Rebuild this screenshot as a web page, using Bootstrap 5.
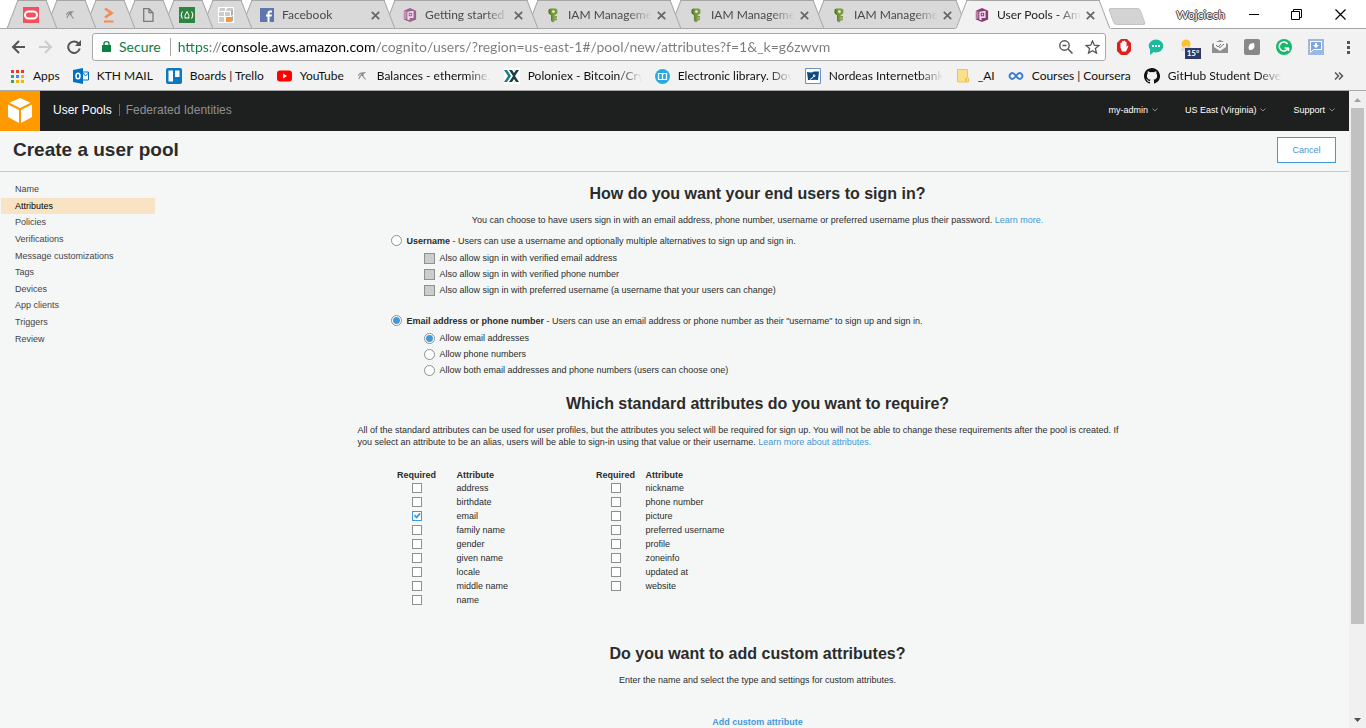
<!DOCTYPE html>
<html lang="en">
<head>
<meta charset="utf-8">
<meta name="viewport" content="width=device-width, initial-scale=1">
<title>User Pools - Amazon Cognito</title>
<link href="https://cdn.jsdelivr.net/npm/bootstrap@5.3.0/dist/css/bootstrap.min.css" rel="stylesheet">
<style>
  :root { --ui: Lato, "Open Sans", sans-serif; --aws: "Liberation Sans", Arial, sans-serif; --blue: #4199d9; }
  body { font-family: var(--aws); font-size: 9px; line-height: 12px; color: #2b2b2b; background: #f5f7f7; }
  button { font: inherit; color: inherit; background: none; border: 0; padding: 0; }
  svg { display: block; flex: none; }

  /* browser window */
  .chrome { font-family: var(--ui); font-size: 12px; line-height: 16px; color: #222; background: #f2f2f2; border-bottom: 1px solid #a9a9a9; }
  .strip { height: 29px; background: #fff; padding-left: 19px; box-shadow: inset 0 -1px #a6a6a6; }
  .tab { position: relative; isolation: isolate; height: 29px; margin-left: -13px; flex: 0 0 156px; padding: 1px 16px 0 20px; color: #4a4a4a; }
  .tab.pinned { flex-basis: 52px; padding: 1px 2px 0 0; }
  .tab::before, .tab::after { content: ""; position: absolute; z-index: -1; top: 0; bottom: 0; background: #d9d9d9; border: 1px solid #a6a6a6; }
  .tab::before { left: 6px; right: 20px; border-right: 0; transform: skewX(-21deg); }
  .tab::after { left: 20px; right: 6px; border-left: 0; transform: skewX(21deg); }
  .tab.current { z-index: 20; color: #222; }
  .tab.current::before, .tab.current::after { background: #f2f2f2; border-bottom-color: #f2f2f2; }
  .tab-title, .mark-title { white-space: nowrap; }
  .tab-title { width: 84px; -webkit-mask-image: linear-gradient(90deg, #000 60px, transparent 84px); }
  .mark-title.long { width: 114px; -webkit-mask-image: linear-gradient(90deg, #000 90px, transparent 114px); }
  .newtab { width: 32px; height: 17px; background: #d3d3d3; border: 1px solid #c3c3c3; border-radius: 3px; transform: skewX(20deg); }
  .user { color: #fff; text-shadow: 1px 0 #444, -1px 0 #444, 0 1px #444, 0 -1px #444; }
  .toolbar { height: 36px; padding: 0 10px 0 11px; }
  .nav-keys { gap: 14px; }
  .omnibox { height: 28px; margin: 0 10px 0 11px; border: 1px solid #a9a9a9; border-radius: 3px; background: #fff; padding: 0 5px 1px 9px; font-size: 14px; }
  .secure { color: #0b8043; }
  .address { border: 0; outline: 0; padding: 0 0 0 7px; margin-left: 9px; border-left: 1px solid #a9a9a9; min-width: 0; height: 18px; color: #7a7a7a; font-size: 14px;
    -webkit-text-fill-color: transparent; -webkit-background-clip: text; background-clip: text;
    background-image: linear-gradient(90deg, #0b8043 38px, #7a7a7a 38px, #7a7a7a 51px, #000 51px, #000 204px, #7a7a7a 204px); }
  .temp { position: absolute; left: 5px; top: 9px; width: 16px; height: 11px; background: #2b3a67; color: #fff; font-size: 8px; line-height: 11px; font-weight: 700; }
  .marks { height: 25px; padding: 0 22px 3px 9px; gap: 13px; }
  .mark-item { color: #111; text-decoration: none; }

  /* console */
  .viewport { height: calc(100vh - 91px); }
  .aws-bar { height: 40px; background: #1e1f1f; color: #fff; }
  .aws-bar a { color: #fff; text-decoration: none; }
  .brand-nav { font-size: 12px; margin-left: 13px; padding-bottom: 2px; }
  .brand-nav a + a { color: #8f9191; border-left: 1px solid #666; padding-left: 6px; margin-left: 7px; }
  .menus { gap: 27px; padding: 0 14px 2px 0; }
  .menus button { gap: 4px; }
  .page-head { height: 41px; border-bottom: 1px solid #c8cbcb; padding: 0 13px 2px; }
  .page-head h1 { font-size: 19px; line-height: 24px; font-weight: 700; }
  .cancel { width: 59px; height: 26px; border: 1px solid var(--blue); border-radius: 0; background: #fff; color: var(--blue); }
  .side { width: 166px; height: 166px; margin-top: 9px; padding-right: 11px; padding-left: 1px; }
  .side a { color: #444; text-decoration: none; padding-left: 14px; flex: 1; display: flex; align-items: center; }
  .side a.active { background: #f8e4c4; color: #000; }
  .content { max-width: 800px; padding-top: 12px; }
  .content h2 { font-size: 16px; line-height: 20px; font-weight: 700; text-align: center; margin: 0 0 10px; }
  .content p { margin: 0; }
  .content .lead-in { padding-right: 25px; }
  .content a { color: var(--blue); text-decoration: none; }
  .method { border: 0; margin: 8px 0 16px 33px; padding: 0; }
  .choice { display: flex; align-items: center; gap: 5px; height: 13px; }
  .subs { margin: 3px 0 0 33px; }
  .subs .choice { height: 16px; }
  .tick { appearance: none; width: 11px; height: 11px; margin: 0; flex: none; background: #fff; border: 1px solid #8b9090; display: block; }
  .tick:disabled { background: #ccc; }
  .tick[type=radio] { border-radius: 50%; }
  .tick[type=radio]:checked { background: radial-gradient(circle, var(--blue) 3px, #fff 4px); }
  .tick[type=checkbox]:checked { border-color: var(--blue); background: #fff url("data:image/svg+xml,%3Csvg xmlns='http://www.w3.org/2000/svg' viewBox='0 0 9 9'%3E%3Cpath d='M1.5 3.5 4 6 8 1.5' fill='none' stroke='%234199d9' stroke-width='2'/%3E%3C/svg%3E"); }
  .tables { margin: 20px 0 37px 29px; }
  .attrs { width: 199px; margin: 0; line-height: 12px; border-collapse: collapse; }
  .attrs th, .attrs td { padding: 0; height: 14px; vertical-align: middle; }
  .attrs th { height: 13px; }
  .attrs th:first-child, .attrs td:first-child { width: 60px; text-align: center; }
  .attrs .tick { margin: 0 auto; width: 10px; height: 10px; }
  .first-set th + th, .first-set td + td { padding-left: 10px; }
  .add { margin-top: 30px; }
  .scroller { width: 17px; background: #f0f0f0; }
  .thumb { width: 13px; height: 81%; background: #c1c1c1; }
</style>
</head>
<body class="vh-100 overflow-hidden">

<svg class="d-none">
  <symbol id="x" viewBox="0 0 9 9"><path d="M.8.8 8.2 8.2M8.2.8.8 8.2" stroke="#666" stroke-width="1.700"/></symbol>
  <symbol id="key" viewBox="0 0 16 16"><path fill="#759c3e" d="M5 0h6l2 1.500v4L11 7H5L3 5.500v-4zM6 7h4v7l-2 2-2-2z"/><path fill="#4f7328" d="M5 0 3 1.500v4L5 7l1 0v7l1 1V7L5 6z"/><circle cx="8.500" cy="3.500" r="1.500" fill="#e8efdc"/><path fill="#759c3e" d="M10 8.500h2.500v2H10zM10 11.500h2.500v2H10z"/></symbol>
  <symbol id="cog" viewBox="0 0 16 16"><path fill="#8a3a75" d="M8 0 15 3v10l-7 3-7-3V3z"/><path fill="#b87aa8" d="M1 3l3 1v8l-3 1z"/><path fill="#f3e6f0" d="M4 4.500 12 3v8.500H7.500V14L5 13V4.500z"/><path fill="#8a3a75" d="M6.500 5.500h4v4h-4z"/><path fill="#f3e6f0" d="M7.700 6.700h1.600v1.600H7.700z"/></symbol>
  <symbol id="mine" viewBox="0 0 8 8"><path d="M.5 4C1 1.500 3 .6 6.500.8L3.500 2.500 7.500 7.500M3 3 .8 7M3.500 2.500 6 3" fill="none" stroke="#888" stroke-width="1.100"/></symbol>
  <symbol id="caret" viewBox="0 0 6 4"><path d="M.5.5 3 3 5.500.5" fill="none" stroke="#8a8a8a"/></symbol>
</svg>

<header class="chrome">
  <div class="strip d-flex">
    <div class="tab pinned d-flex align-items-center justify-content-center" style="z-index:12"><svg width="16" height="16"><path fill="#f1525e" d="M0 0h16v16H0z"/><rect x="2" y="4.500" width="12" height="7" rx="3.500" fill="none" stroke="#fff" stroke-width="2"/></svg></div>
    <div class="tab pinned d-flex align-items-center justify-content-center" style="z-index:11"><svg width="8" height="8"><use href="#mine"/></svg></div>
    <div class="tab pinned d-flex align-items-center justify-content-center" style="z-index:10"><svg width="10" height="16"><path d="M1 1.500 7.500 6 1 10.500" fill="none" stroke="#f58a52" stroke-width="2.600"/><path fill="#f58a52" d="M0 13.500h9.500v2H0z"/></svg></div>
    <div class="tab pinned d-flex align-items-center justify-content-center" style="z-index:9"><svg width="11" height="14"><path d="M.7.7H6l4 4v8.600H.7zM6 .7v4h4" fill="none" stroke="#7a7a7a" stroke-width="1.300"/></svg></div>
    <div class="tab pinned d-flex align-items-center justify-content-center" style="z-index:8"><svg width="16" height="16"><path fill="#2e8540" d="M0 0h16v16H0z"/><path d="M3.500 4.500Q1 8 3.500 11.500M12.500 4.500q2.500 3.500 0 7" fill="none" stroke="#fff" stroke-width="1.100"/><path d="M5.500 11h5M8 4.500l2 4q0 1.500-1 2.500M8 4.500l-2 4q-.5 1.500.5 2.500" fill="none" stroke="#fff"/></svg></div>
    <div class="tab pinned d-flex align-items-center justify-content-center" style="z-index:7"><svg width="16" height="16"><path fill="#fff" d="M0 0h16v16H0z"/><path fill="#ccc" d="M2 1h5v3H1zM9 1h6l-1 3H8zM1 5h5v4H1zM7 5h5v4H7zM1 10h5v5H1z"/><path fill="#b0b0b0" d="M13 4l2-2v6l-2 1z"/><path fill="#aaa" d="M13 10l2-1v5l-2 1z"/><path fill="#f79838" d="M8 10h5v5H8z"/></svg></div>
    <div class="tab d-flex align-items-center" style="z-index:6"><svg width="14" height="14" class="me-2"><path fill="#6076ae" d="M0 0h14v14H0z"/><path fill="#fff" d="M7.500 14V8.500H6v-2h1.500V5q0-2.500 2.500-2.500h2v2h-1.200q-1.300 0-1.300 1v1H12l-.3 2H9.500V14z"/></svg><span class="tab-title">Facebook</span><button class="ms-auto" aria-label="Close tab"><svg width="9" height="9"><use href="#x"/></svg></button></div>
    <div class="tab d-flex align-items-center" style="z-index:5"><svg width="14" height="16" class="me-2" opacity=".75"><use href="#cog"/></svg><span class="tab-title">Getting started</span><button class="ms-auto" aria-label="Close tab"><svg width="9" height="9"><use href="#x"/></svg></button></div>
    <div class="tab d-flex align-items-center" style="z-index:4"><svg width="14" height="15" class="me-2"><use href="#key"/></svg><span class="tab-title">IAM Manageme</span><button class="ms-auto" aria-label="Close tab"><svg width="9" height="9"><use href="#x"/></svg></button></div>
    <div class="tab d-flex align-items-center" style="z-index:3"><svg width="14" height="15" class="me-2"><use href="#key"/></svg><span class="tab-title">IAM Manageme</span><button class="ms-auto" aria-label="Close tab"><svg width="9" height="9"><use href="#x"/></svg></button></div>
    <div class="tab d-flex align-items-center" style="z-index:2"><svg width="14" height="15" class="me-2"><use href="#key"/></svg><span class="tab-title">IAM Manageme</span><button class="ms-auto" aria-label="Close tab"><svg width="9" height="9"><use href="#x"/></svg></button></div>
    <div class="tab current d-flex align-items-center"><svg width="14" height="16" class="me-2"><use href="#cog"/></svg><span class="tab-title">User Pools - Am</span><button class="ms-auto" aria-label="Close tab"><svg width="9" height="9"><use href="#x"/></svg></button></div>
    <button class="newtab mt-2 flex-shrink-0" aria-label="New tab"></button>
    <div class="d-flex align-items-center ms-auto pe-3 me-1">
      <button class="user me-3">Wojciech</button>
      <button class="ms-2 me-4" aria-label="Minimize"><svg width="10" height="11"><path d="M0 5.500h10" stroke="#000"/></svg></button>
      <button class="ms-2 me-4" aria-label="Restore"><svg width="12" height="11"><path d="M.5 2.500h8v8h-8zM2.500 2.500v-2h8v8h-2" fill="none" stroke="#000"/></svg></button>
      <button class="ms-2" aria-label="Close"><svg width="11" height="11"><path d="M.5.5l10 10M10.500.5l-10 10" stroke="#000" stroke-width="1.200"/></svg></button>
    </div>
  </div>

  <div class="toolbar d-flex align-items-center">
    <div class="nav-keys d-flex">
      <button aria-label="Back"><svg width="14" height="14"><path d="M14 7H2M8 1 2 7l6 6" fill="none" stroke="#555" stroke-width="2"/></svg></button>
      <button aria-label="Forward" disabled><svg width="14" height="14"><path d="M0 7h12M6 1l6 6-6 6" fill="none" stroke="#ccc" stroke-width="2"/></svg></button>
      <button aria-label="Reload"><svg width="14" height="14"><path d="M11.500 3.500A5.800 5.800 0 1 0 12.700 8.500" fill="none" stroke="#555" stroke-width="2"/><path fill="#555" d="M14 0v6H8z"/></svg></button>
    </div>
    <div class="omnibox d-flex align-items-center flex-fill">
      <svg width="9" height="11"><path fill="#0b8043" d="M0 4h9v7H0z"/><path d="M2 4V2.500Q2 .7 4.500.7T7 2.500V4" fill="none" stroke="#0b8043" stroke-width="1.300"/></svg>
      <label class="secure ps-2" for="url">Secure</label>
      <input class="address flex-fill" id="url" type="text" value="https://console.aws.amazon.com/cognito/users/?region=us-east-1#/pool/new/attributes?f=1&amp;_k=g6zwvm">
      <button aria-label="Zoom"><svg width="14" height="14"><circle cx="5.500" cy="5.500" r="4.700" fill="none" stroke="#555" stroke-width="1.400"/><path d="M3.500 5.500h4M9 9l4.500 4.500" stroke="#555" stroke-width="1.500"/></svg></button>
      <button class="ms-2 ps-1" aria-label="Bookmark"><svg width="15" height="14" viewBox="0 0 15 14"><path d="M7.500 1l1.800 4.200 4.700.4-3.600 3 1.100 4.500-4-2.400-4 2.400 1.100-4.500L1 5.600l4.700-.4z" fill="none" stroke="#555" stroke-width="1.300"/></svg></button>
    </div>
    <div class="d-flex align-items-center gap-3">
      <button aria-label="Ad blocker"><svg width="16" height="16"><path fill="#e01f1f" d="M5 0h6l4 4v8l-4 4H5l-4-4V4z"/><path fill="#fff" d="M4.500 8.500V4q.8-1 1.500 0V2.500q.8-1 1.500 0V2q.8-1 1.500 0v1q.8-1 1.500 0v5l1-1.500q1 0 .8 1L10 12.500H6z"/></svg></button>
      <button aria-label="Chat"><svg width="16" height="16"><ellipse cx="8" cy="7" rx="7.300" ry="6.500" fill="#1abc9c"/><path fill="#1abc9c" d="M2 10v6l5-4z"/><path fill="#fff" d="M4 6h2v2H4zM7 6h2v2H7zM10 6h2v2h-2z"/></svg></button>
      <button class="position-relative" aria-label="Weather"><svg width="16" height="16"><circle cx="6" cy="5" r="4.500" fill="#f9c22e"/><path fill="#ddd" d="M1 11q0-3 3-3 2-3 5 0 4 0 5 4H1z"/></svg><span class="temp">15°</span></button>
      <button aria-label="Mail tracker"><svg width="16" height="16"><path fill="#8f8f8f" d="M0 5l8-4 8 4v9H0z"/><path fill="#f5f5f5" d="M2 3h12v5l-6 4-6-4z"/><path d="M4 6l2 2 3-3M7 8l1 .5L12 5" fill="none" stroke="#777"/></svg></button>
      <button aria-label="Extension"><svg width="16" height="16"><rect width="16" height="16" rx="2" fill="#888"/><path fill="#fff" d="M5 11Q3 4 10 4q2 7-4 7z"/></svg></button>
      <button aria-label="Grammar"><svg width="16" height="16"><circle cx="8" cy="8" r="8" fill="#15b86c"/><path d="M11.500 5A4.500 4.500 0 1 0 12 9H8.500M12.500 9v3" fill="none" stroke="#fff" stroke-width="1.600"/></svg></button>
      <button aria-label="Save page"><svg width="16" height="16"><path fill="#9bb8e4" d="M0 0h16v16H0z"/><path d="M2.500 2.500h11v8h-8l-3 3z" fill="#7ea5dd" stroke="#fff"/><path fill="#fff" d="M7 4h2v2h2l-3 3-3-3h2z"/></svg></button>
      <button aria-label="Menu"><svg width="16" height="16"><path fill="#555" d="M7 2h3v3H7zM7 7h3v3H7zM7 12h3v3H7z"/></svg></button>
    </div>
  </div>

  <nav class="marks d-flex align-items-center" aria-label="Bookmarks">
    <a href="#" class="mark-item d-flex align-items-center gap-2"><svg width="16" height="14"><path fill="#e33b2e" d="M2 1h3v3H2zM7 1h3v3H7zM12 1h3v3h-3z"/><path fill="#35a852" d="M2 6h3v3H2z"/><path fill="#4285f4" d="M7 6h3v3H7z"/><path fill="#f4b400" d="M12 6h3v3h-3zM7 11h3v3H7zM12 11h3v3h-3z"/><path fill="#35a852" d="M2 11h3v3H2z"/></svg><span class="mark-title">Apps</span></a>
    <a href="#" class="mark-item d-flex align-items-center gap-2"><svg width="16" height="16"><path fill="#0072c6" d="M0 2 10 0v16L0 14z"/><path d="M10 4h5.500v8H10M10 5l2.500 3L15.500 5" fill="#fff" stroke="#0072c6"/><ellipse cx="5" cy="8" rx="2" ry="2.800" fill="none" stroke="#fff" stroke-width="1.500"/></svg><span class="mark-title">KTH MAIL</span></a>
    <a href="#" class="mark-item d-flex align-items-center gap-2"><svg width="16" height="16"><rect width="16" height="16" rx="2" fill="#0b79bf"/><path fill="#fff" d="M2.500 2.500H7v11H2.500zM9 2.500h4.500V9H9z"/></svg><span class="mark-title">Boards | Trello</span></a>
    <a href="#" class="mark-item d-flex align-items-center gap-2"><svg width="15" height="12"><rect width="15" height="11" y=".5" rx="3" fill="#f00"/><path fill="#fff" d="M6 3.500 10 6l-4 2.500z"/></svg><span class="mark-title">YouTube</span></a>
    <a href="#" class="mark-item d-flex align-items-center gap-2"><svg width="12" height="8" viewBox="-1 0 12 8"><use href="#mine" width="8" height="8"/></svg><span class="mark-title long">Balances - ethermine.</span></a>
    <a href="#" class="mark-item d-flex align-items-center gap-2"><svg width="16" height="16"><path fill="#fff" d="M0 0h16v16H0z"/><path fill="#167f85" d="M0 2h3l4 6-4 6H0l4-6z"/><path fill="#1d3d43" d="M5 2h3l2 3 2-3h3l-4 6 4 6h-3l-2-3-2 3H5l4-6z"/></svg><span class="mark-title long">Poloniex - Bitcoin/Cry</span></a>
    <a href="#" class="mark-item d-flex align-items-center gap-2"><svg width="15" height="15"><circle cx="7.500" cy="7.500" r="7.500" fill="#29abe2"/><path d="M3.500 4.500h3l1 1 1-1h3v6h-8zM7.500 5v6" fill="none" stroke="#fff" stroke-width="1.200"/></svg><span class="mark-title long">Electronic library. Dov</span></a>
    <a href="#" class="mark-item d-flex align-items-center gap-2"><svg width="16" height="16"><path fill="#fff" stroke="#6c8fc4" d="M.5.5h15v15H.5z"/><path fill="#0b4b82" d="M2 4q5 1 7-.5h5L13 12q-4-.5-5 0H3z"/><path d="M5 11.500q4-1.500 4-5 1.500.5.5 2.500" fill="none" stroke="#fff"/></svg><span class="mark-title long">Nordeas Internetbank</span></a>
    <a href="#" class="mark-item d-flex align-items-center gap-2"><svg width="14" height="16"><path fill="#fbe08b" stroke="#ecc555" d="M1.500 1.500h10V10h1v4h-11z"/><path fill="#ecc555" d="M9 10h2v4H9z"/></svg><span class="mark-title">_AI</span></a>
    <a href="#" class="mark-item d-flex align-items-center gap-2"><svg width="16" height="10"><path d="M8 5Q5 9 3 7.500 0 5 3 2.500 5 1 8 5t5 2.500q3-2.500 0-5Q11 1 8 5z" fill="none" stroke="#3f7fd0" stroke-width="2"/></svg><span class="mark-title">Courses | Coursera</span></a>
    <a href="#" class="mark-item d-flex align-items-center gap-2"><svg width="16" height="16" viewBox="0 0 16 16"><path fill="#111" d="M8 0C3.580 0 0 3.580 0 8c0 3.540 2.290 6.530 5.470 7.590.4.070.55-.17.55-.38V13.800c-2.010.37-2.530-.49-2.690-.94-.09-.23-.48-.94-.82-1.130-.28-.15-.68-.52-.01-.53.63-.01 1.080.58 1.230.82.72 1.210 1.870.87 2.330.66.07-.52.28-.87.51-1.070-1.780-.2-3.640-.89-3.640-3.950 0-.87.31-1.590.82-2.150-.08-.2-.36-1.020.08-2.120 0 0 .67-.21 2.200.82a7.600 7.600 0 0 1 4 0c1.530-1.040 2.200-.82 2.200-.82.44 1.100.16 1.920.08 2.120.51.56.82 1.270.82 2.150 0 3.070-1.870 3.750-3.650 3.950.29.25.54.73.54 1.480v2.120c0 .21.15.46.55.38A8 8 0 0 0 8 0"/></svg><span class="mark-title long">GitHub Student Deve</span></a>
    <button class="ms-auto" aria-label="More bookmarks"><svg width="10" height="8"><path d="M1 .5 4.500 4 1 7.500M5 .5 8.500 4 5 7.500" fill="none" stroke="#555" stroke-width="1.500"/></svg></button>
  </nav>
</header>

<div class="viewport d-flex overflow-hidden">
  <div class="flex-fill">
    <div class="aws-bar d-flex align-items-center">
      <a href="#" aria-label="Services"><svg width="40" height="40"><path fill="#f90" d="M0 0h40v40H0z"/><path fill="#fff" d="M20 7l10.500 4.800L20 17 9.500 11.800zM8 13.500l11 5.500v13L8 26zM32 13.500 21 19v13l11-6z"/></svg></a>
      <nav class="brand-nav d-flex"><a href="#">User Pools</a><a href="#">Federated Identities</a></nav>
      <div class="menus d-flex ms-auto">
        <button class="d-flex align-items-center">my-admin<svg width="6" height="4"><use href="#caret"/></svg></button>
        <button class="d-flex align-items-center">US East (Virginia)<svg width="6" height="4"><use href="#caret"/></svg></button>
        <button class="d-flex align-items-center">Support<svg width="6" height="4"><use href="#caret"/></svg></button>
      </div>
    </div>
    <div class="page-head d-flex align-items-center justify-content-between">
      <h1 class="m-0">Create a user pool</h1>
      <button class="cancel">Cancel</button>
    </div>
    <div class="d-flex align-items-start">
      <nav class="side d-flex flex-column flex-shrink-0" aria-label="Steps">
        <a href="#">Name</a><a href="#" class="active">Attributes</a><a href="#">Policies</a><a href="#">Verifications</a><a href="#">Message customizations</a><a href="#">Tags</a><a href="#">Devices</a><a href="#">App clients</a><a href="#">Triggers</a><a href="#">Review</a>
      </nav>
      <main class="flex-fill">
        <div class="content mx-auto">
          <section>
            <h2>How do you want your end users to sign in?</h2>
            <p class="text-center">You can choose to have users sign in with an email address, phone number, username or preferred username plus their password. <a href="#">Learn more.</a></p>
            <fieldset class="method">
              <div class="choice"><input class="tick" type="radio" name="method" id="m1"><label for="m1"><b>Username</b> - Users can use a username and optionally multiple alternatives to sign up and sign in.</label></div>
              <div class="subs">
                <div class="choice"><input class="tick" type="checkbox" id="s1" disabled><label for="s1">Also allow sign in with verified email address</label></div>
                <div class="choice"><input class="tick" type="checkbox" id="s2" disabled><label for="s2">Also allow sign in with verified phone number</label></div>
                <div class="choice"><input class="tick" type="checkbox" id="s3" disabled><label for="s3">Also allow sign in with preferred username (a username that your users can change)</label></div>
              </div>
            </fieldset>
            <fieldset class="method">
              <div class="choice"><input class="tick" type="radio" name="method" id="m2" checked><label for="m2"><b>Email address or phone number</b> - Users can use an email address or phone number as their "username" to sign up and sign in.</label></div>
              <div class="subs">
                <div class="choice"><input class="tick" type="radio" name="alias" id="a1" checked><label for="a1">Allow email addresses</label></div>
                <div class="choice"><input class="tick" type="radio" name="alias" id="a2"><label for="a2">Allow phone numbers</label></div>
                <div class="choice"><input class="tick" type="radio" name="alias" id="a3"><label for="a3">Allow both email addresses and phone numbers (users can choose one)</label></div>
              </div>
            </fieldset>
          </section>
          <section>
            <h2>Which standard attributes do you want to require?</h2>
            <p class="lead-in">All of the standard attributes can be used for user profiles, but the attributes you select will be required for sign up. You will not be able to change these requirements after the pool is created. If you select an attribute to be an alias, users will be able to sign-in using that value or their username. <a href="#">Learn more about attributes.</a></p>
            <div class="tables d-flex align-items-start">
              <table class="attrs first-set">
                <thead><tr><th>Required</th><th>Attribute</th></tr></thead>
                <tbody>
                  <tr><td><input class="tick" type="checkbox" id="t1"></td><td><label for="t1">address</label></td></tr>
                  <tr><td><input class="tick" type="checkbox" id="t2"></td><td><label for="t2">birthdate</label></td></tr>
                  <tr><td><input class="tick" type="checkbox" id="t3" checked></td><td><label for="t3">email</label></td></tr>
                  <tr><td><input class="tick" type="checkbox" id="t4"></td><td><label for="t4">family name</label></td></tr>
                  <tr><td><input class="tick" type="checkbox" id="t5"></td><td><label for="t5">gender</label></td></tr>
                  <tr><td><input class="tick" type="checkbox" id="t6"></td><td><label for="t6">given name</label></td></tr>
                  <tr><td><input class="tick" type="checkbox" id="t7"></td><td><label for="t7">locale</label></td></tr>
                  <tr><td><input class="tick" type="checkbox" id="t8"></td><td><label for="t8">middle name</label></td></tr>
                  <tr><td><input class="tick" type="checkbox" id="t9"></td><td><label for="t9">name</label></td></tr>
                </tbody>
              </table>
              <table class="attrs">
                <thead><tr><th>Required</th><th>Attribute</th></tr></thead>
                <tbody>
                  <tr><td><input class="tick" type="checkbox" id="t10"></td><td><label for="t10">nickname</label></td></tr>
                  <tr><td><input class="tick" type="checkbox" id="t11"></td><td><label for="t11">phone number</label></td></tr>
                  <tr><td><input class="tick" type="checkbox" id="t12"></td><td><label for="t12">picture</label></td></tr>
                  <tr><td><input class="tick" type="checkbox" id="t13"></td><td><label for="t13">preferred username</label></td></tr>
                  <tr><td><input class="tick" type="checkbox" id="t14"></td><td><label for="t14">profile</label></td></tr>
                  <tr><td><input class="tick" type="checkbox" id="t15"></td><td><label for="t15">zoneinfo</label></td></tr>
                  <tr><td><input class="tick" type="checkbox" id="t16"></td><td><label for="t16">updated at</label></td></tr>
                  <tr><td><input class="tick" type="checkbox" id="t17"></td><td><label for="t17">website</label></td></tr>
                </tbody>
              </table>
            </div>
          </section>
          <section class="text-center">
            <h2>Do you want to add custom attributes?</h2>
            <p>Enter the name and select the type and settings for custom attributes.</p>
            <a class="add d-inline-block fw-bold" href="#">Add custom attribute</a>
          </section>
        </div>
      </main>
    </div>
  </div>
  <div class="scroller d-flex flex-column align-items-center flex-shrink-0" aria-hidden="true">
    <svg width="17" height="17"><path fill="#a3a3a3" d="M8.500 7 12 11H5z"/></svg>
    <div class="thumb"></div>
    <svg class="mt-auto" width="17" height="17"><path fill="#505050" d="M8.500 11 12 7H5z"/></svg>
  </div>
</div>
<script src="https://cdn.jsdelivr.net/npm/bootstrap@5.3.0/dist/js/bootstrap.bundle.min.js"></script>
</body>
</html>
